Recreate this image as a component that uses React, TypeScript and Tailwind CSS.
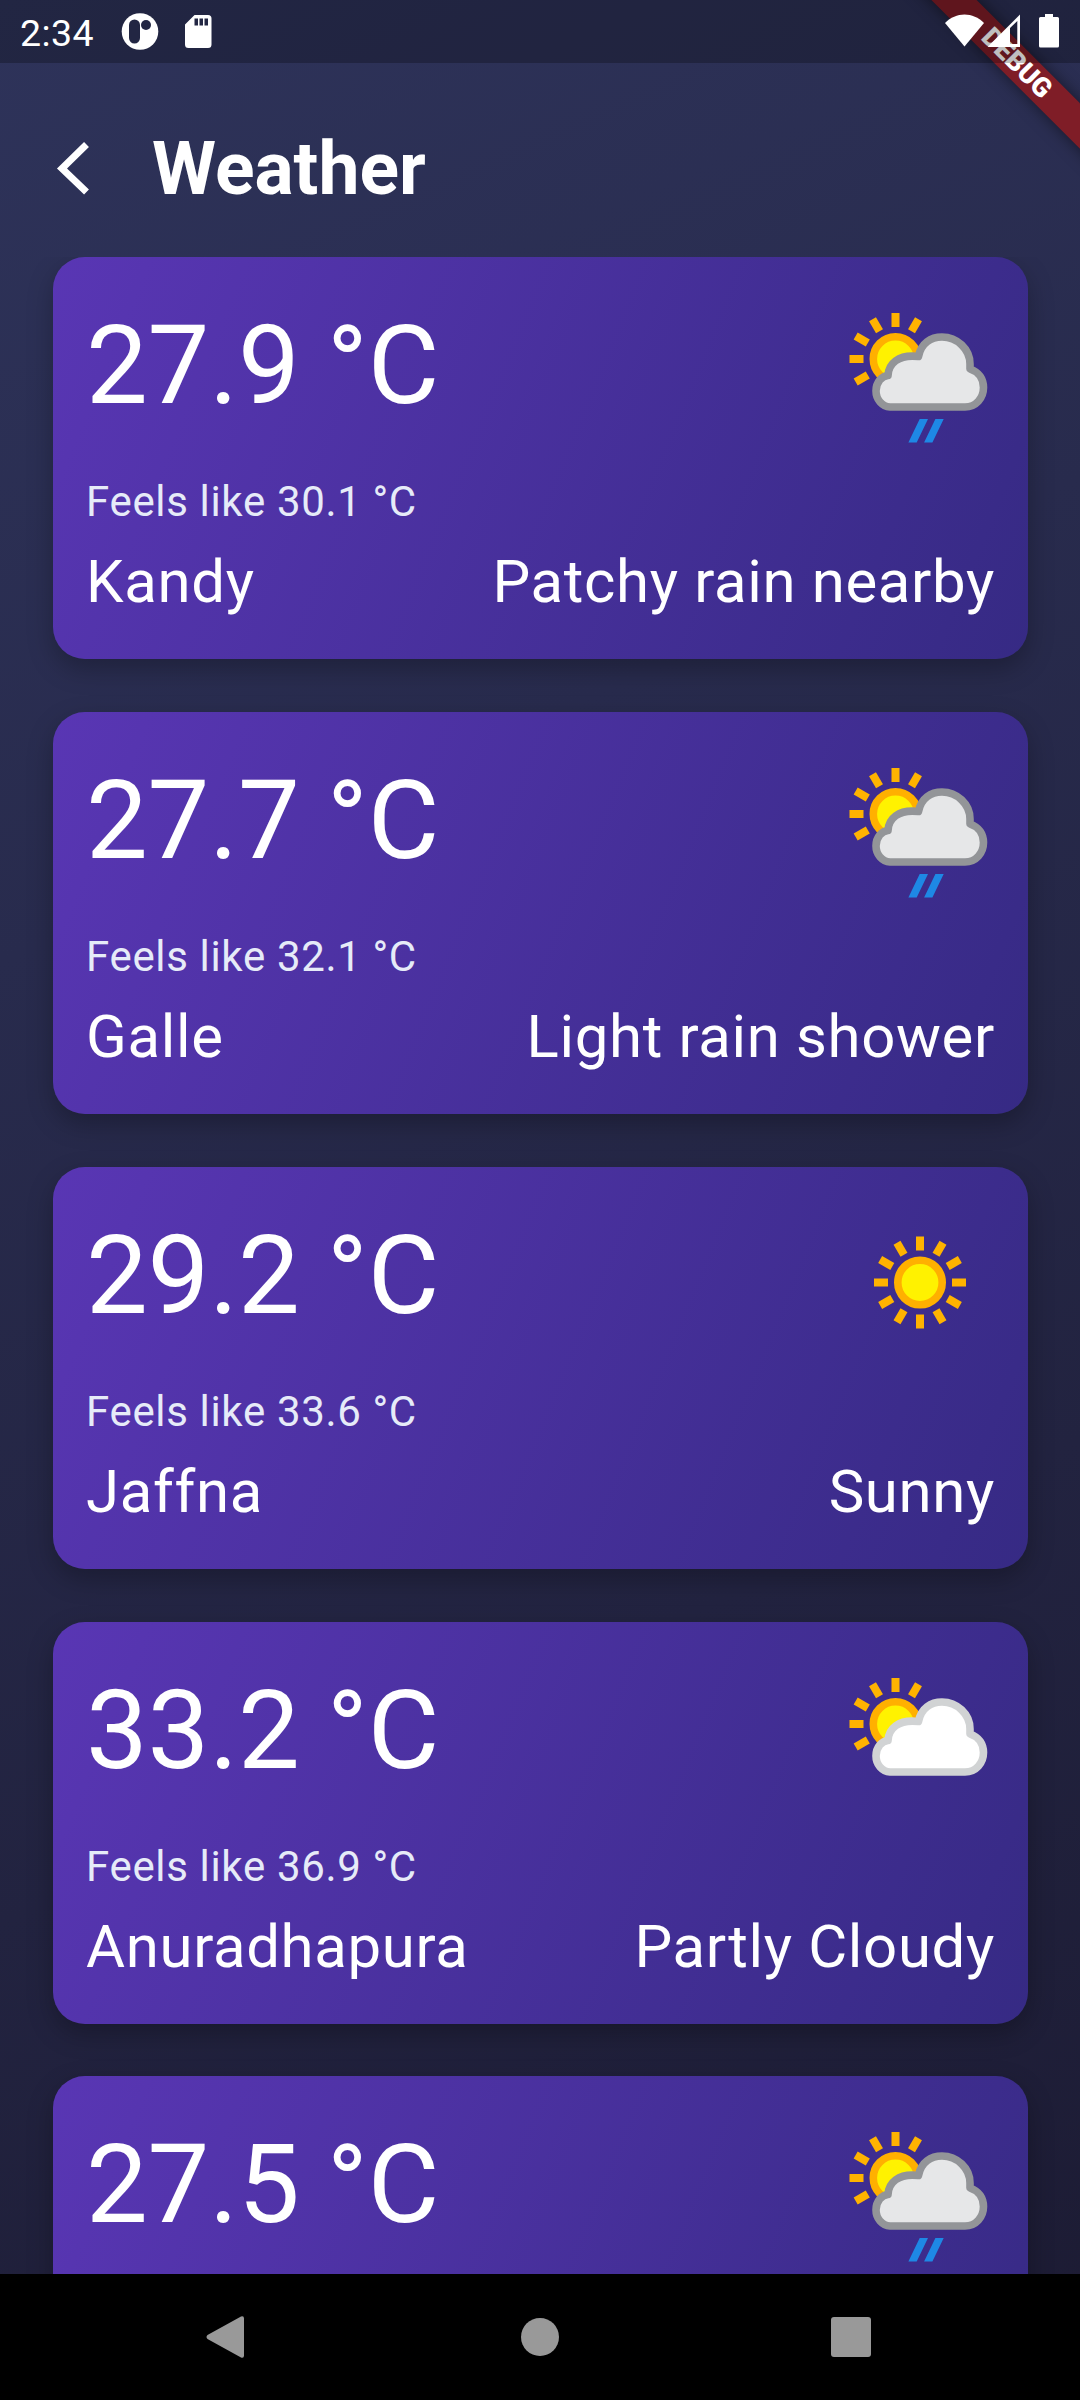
type Entry = { temp: string; feels?: string; city?: string; text?: string; kind: string };

const cards: Entry[] = [
  { temp: "27.9", feels: "30.1", city: "Kandy", text: "Patchy rain nearby", kind: "rain" },
  { temp: "27.7", feels: "32.1", city: "Galle", text: "Light rain shower", kind: "rain" },
  { temp: "29.2", feels: "33.6", city: "Jaffna", text: "Sunny", kind: "sun" },
  { temp: "33.2", feels: "36.9", city: "Anuradhapura", text: "Partly Cloudy", kind: "cloud" },
  { temp: "27.5", kind: "rain" },
];

function Sun({ cx, cy, angles }: { cx: number; cy: number; angles: number[] }) {
  return (
    <g>
      {angles.map((a) => (
        <rect key={a} x={cx - 4} y={cy - 46} width="8" height="14" fill="#ffb300" transform={`rotate(${a} ${cx} ${cy})`} />
      ))}
      <circle cx={cx} cy={cy} r="22.2" fill="#fff200" stroke="#ffb000" strokeWidth="7.6" />
    </g>
  );
}

function WeatherIcon({ kind }: { kind: string }) {
  const all = [0, 30, 60, 90, 120, 150, 180, 210, 240, 270, 300, 330];
  return (
    <svg className="h-[170px] w-[200px]" viewBox="0 0 200 170">
      {kind === "sun" ? (
        <Sun cx={100} cy={82.5} angles={all} />
      ) : (
        <>
          <Sun cx={75.5} cy={69} angles={[240, 270, 300, 330, 0, 30]} />
          <path
            d="M70 117 A15 16 0 0 1 56 101 C56 92 62 86 68 85.5 C68.500 74 78 64 98.500 66.500 C101 53 111 47 122 47 C137 47 150 59 150 74 L150 79 C159 82 163.500 89 163.500 97.500 C163.500 108 156 117 145 117 Z"
            fill={kind === "rain" ? "#e6e7e8" : "#fff"}
            stroke={kind === "rain" ? "#939598" : "#d1d3d4"}
            strokeWidth="7.600"
            strokeLinejoin="round"
          />
          {kind === "rain" && <path d="M99.700 129h8.300l-11.300 23.500h-8.300zM115.400 129h8.300l-11.300 23.500h-8.300z" fill="#1e88e5" />}
        </>
      )}
    </svg>
  );
}

function Card({ c }: { c: Entry }) {
  return (
    <section className="flex h-[402px] shrink-0 flex-col rounded-[32px] bg-[linear-gradient(112.4deg,#5936B4,#362A84)] px-[33px] text-white shadow-[0_10px_26px_rgba(0,0,0,0.26)]">
      <div className="flex h-[206px] justify-between">
        <div className="pt-[44px] text-[110px] leading-[129px] tracking-[-0.2px] whitespace-pre">{c.temp} °C</div>
        <div className="-mr-[25px] pt-[33px]">
          <WeatherIcon kind={c.kind} />
        </div>
      </div>
      {c.feels && (
        <div className="mt-[14px] text-[42px] leading-[50px] tracking-[0.66px] text-[#e6ebf8]">Feels like {c.feels} °C</div>
      )}
      {c.city && (
        <div className="mt-[20px] flex justify-between text-[59.9px] leading-[70px] tracking-[0.66px]">
          <span>{c.city}</span>
          <span>{c.text}</span>
        </div>
      )}
    </section>
  );
}

export default function App() {
  return (
    <div className="relative flex h-[2400px] w-[1080px] flex-col overflow-hidden bg-[linear-gradient(155.8deg,#2E335A,#1C1B33)] font-['Roboto',sans-serif]">
      {/* Debug ribbon */}
      <div className="absolute top-[46.5px] left-[857px] flex h-[32px] w-[320px] rotate-45 items-center justify-center bg-[#7f1d27] text-[27px] leading-none font-black text-white shadow-[0_0_16px_rgba(0,0,0,0.5)]">
        DEBUG
      </div>
      <header className="relative flex h-[63px] shrink-0 items-center justify-between bg-black/25 text-white">
        <div className="flex items-center">
          <span className="ml-[20px] w-[101px] pt-[4px] text-[37.5px] leading-[63px] tracking-[0.400px]">2:34</span>
          <svg className="h-[63px] w-[100px]" viewBox="121 0 100 63" fill="#fff">
            <circle cx="140" cy="31.500" r="18.300" />
            <rect x="129" y="19.500" width="11" height="24" rx="5.500" fill="#222643" />
            <circle cx="146" cy="25" r="5" fill="#222643" />
            <path d="M194.500 15H208a3.500 3.500 0 0 1 3.500 3.500V44.500a3.500 3.500 0 0 1-3.500 3.500H188.500a3.500 3.500 0 0 1-3.500-3.500V24.500Z" />
            <path d="M194.500 18.500h3.500v7h-3.500zM199.500 18.500h3.500v7h-3.500zM204.500 18.500h3.500v7h-3.500z" fill="#222643" />
          </svg>
        </div>
        <svg className="h-[63px] w-[180px]" viewBox="900 0 180 63" fill="#fff">
          <path d="M945 23C956 11.500 973 11.500 984 23L964.500 46.500Z" />
          <path fillRule="evenodd" d="M987.500 47 1020 14.500V47ZM1010 28V44H1017.300V21Z" />
          <path d="M1045 14h8v3h4.500a1.500 1.500 0 0 1 1.500 1.500V46a1.500 1.500 0 0 1-1.500 1.500H1040.500a1.500 1.500 0 0 1-1.500-1.500V18.500a1.500 1.500 0 0 1 1.500-1.500h4.500Z" />
        </svg>
      </header>
      <div className="flex h-[194.4px] shrink-0 items-center pt-[16px]">
        <svg className="ml-[53px] h-[60px] w-[40px]" viewBox="0 0 40 60" fill="none" stroke="#fff" strokeWidth="7">
          <path d="M33.500 6.500 9 30.500 33.500 54" />
        </svg>
        <h1 className="ml-[59px] pt-[2px] text-[73.200px] leading-[86px] font-bold text-white">Weather</h1>
      </div>
      <main className="flex min-h-0 flex-1 flex-col gap-[52.75px] overflow-hidden pr-[52px] pl-[53px]">
        {cards.map((c) => (
          <Card key={c.temp} c={c} />
        ))}
      </main>
      <nav className="relative h-[126px] shrink-0 bg-black">
        <svg className="h-[126px] w-[1080px]" viewBox="0 2274 1080 126" fill="#999">
          <path d="M207.500 2335Q205.500 2337 207.500 2339L241 2357.500Q244 2358.500 244 2355.500V2318.500Q244 2315.500 241 2316.500Z" />
          <circle cx="540" cy="2337" r="19" />
          <rect x="831" y="2317" width="40" height="40" rx="3" />
        </svg>
      </nav>
    </div>
  );
}
